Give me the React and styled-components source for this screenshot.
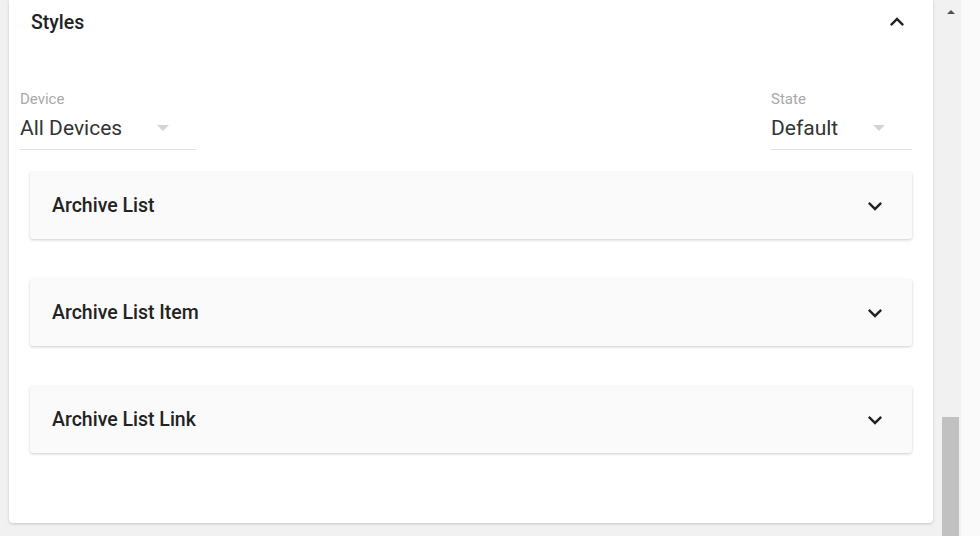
import React from 'react';
import styled, { createGlobalStyle } from 'styled-components';

const GlobalStyle = createGlobalStyle`
  html, body {
    margin: 0;
    padding: 0;
    background: #f1f1f1;
    font-family: Roboto, "Liberation Sans", Arial, sans-serif;
  }
`;

const Page = styled.div`
  display: flex;
  height: 536px;
  overflow: hidden;
`;

const Main = styled.div`
  width: 940px;
  padding: 0 7px 0 9px;
  box-sizing: border-box;
`;

const Card = styled.div`
  background: #fff;
  border-radius: 0 0 4px 4px;
  box-shadow: 0 1px 3px rgba(0, 0, 0, 0.18);
  height: 523px;
  display: flex;
  flex-direction: column;
`;

const Header = styled.div`
  display: flex;
  align-items: center;
  justify-content: space-between;
  height: 44px;
  padding: 0 22px 0 22px;
`;

const Title = styled.h2`
  margin: 0;
  font-size: 19.5px;
  font-weight: 500;
  color: #222;
`;

const Filters = styled.div`
  display: flex;
  justify-content: space-between;
  margin-top: 46px;
  padding: 0 21px 0 11px;
`;

const Field = styled.div`
  width: ${p => p.$width}px;
`;

const Label = styled.div`
  font-size: 15px;
  line-height: 18px;
  color: #a8a8a8;
`;

const Value = styled.div`
  display: flex;
  align-items: center;
  justify-content: space-between;
  padding: 7px 0 8px;
  border-bottom: 1px solid #e0e0e0;
  font-size: 21px;
  line-height: 26px;
  color: #333;
`;

const Caret = styled.span`
  width: 0;
  height: 0;
  margin-right: 27px;
  border-left: 6px solid transparent;
  border-right: 6px solid transparent;
  border-top: 6px solid #d4d4d4;
`;

const List = styled.div`
  display: flex;
  flex-direction: column;
  gap: 40px;
  margin-top: 22px;
  padding: 0 21px;
`;

const Panel = styled.div`
  display: flex;
  align-items: center;
  justify-content: space-between;
  height: 67px;
  padding: 0 23px 0 22px;
  background: #fafafa;
  border-radius: 3px;
  box-shadow: 0 1px 3px rgba(0, 0, 0, 0.2);
`;

const PanelTitle = styled.span`
  font-size: 19.5px;
  font-weight: 500;
  color: #222;
`;

const Scrollbar = styled.div`
  width: 21px;
  background: #f1f1f1;
  display: flex;
  flex-direction: column;
  align-items: center;
  justify-content: space-between;
`;

const ArrowUp = styled.span`
  margin-top: 10px;
  width: 0;
  height: 0;
  border-left: 4px solid transparent;
  border-right: 4px solid transparent;
  border-bottom: 4px solid #505050;
`;

const Thumb = styled.div`
  width: 17px;
  height: 119px;
  background: #c1c1c1;
`;

const Gutter = styled.div`
  flex: 1;
  background: #fafafa;
`;

const Chevron = ({ up }) => (
  <svg width="28" height="28" viewBox="0 0 24 24" fill="#222">
    {up ? (
      <path d="M7.41 15.41 12 10.83l4.59 4.58L18 14l-6-6-6 6z" />
    ) : (
      <path d="M7.41 8.59 12 13.17l4.59-4.58L18 10l-6 6-6-6 1.41-1.41z" />
    )}
  </svg>
);

const Select = ({ label, value, width }) => (
  <Field $width={width}>
    <Label>{label}</Label>
    <Value>
      {value}
      <Caret />
    </Value>
  </Field>
);

const sections = ['Archive List', 'Archive List Item', 'Archive List Link'];

const App = () => (
  <Page>
    <GlobalStyle />
    <Main>
      <Card>
        <Header>
          <Title>Styles</Title>
          <Chevron up />
        </Header>
        <Filters>
          <Select label="Device" value="All Devices" width={176} />
          <Select label="State" value="Default" width={141} />
        </Filters>
        <List>
          {sections.map(name => (
            <Panel key={name}>
              <PanelTitle>{name}</PanelTitle>
              <Chevron />
            </Panel>
          ))}
        </List>
      </Card>
    </Main>
    <Scrollbar>
      <ArrowUp />
      <Thumb />
    </Scrollbar>
    <Gutter />
  </Page>
);

export default App;
